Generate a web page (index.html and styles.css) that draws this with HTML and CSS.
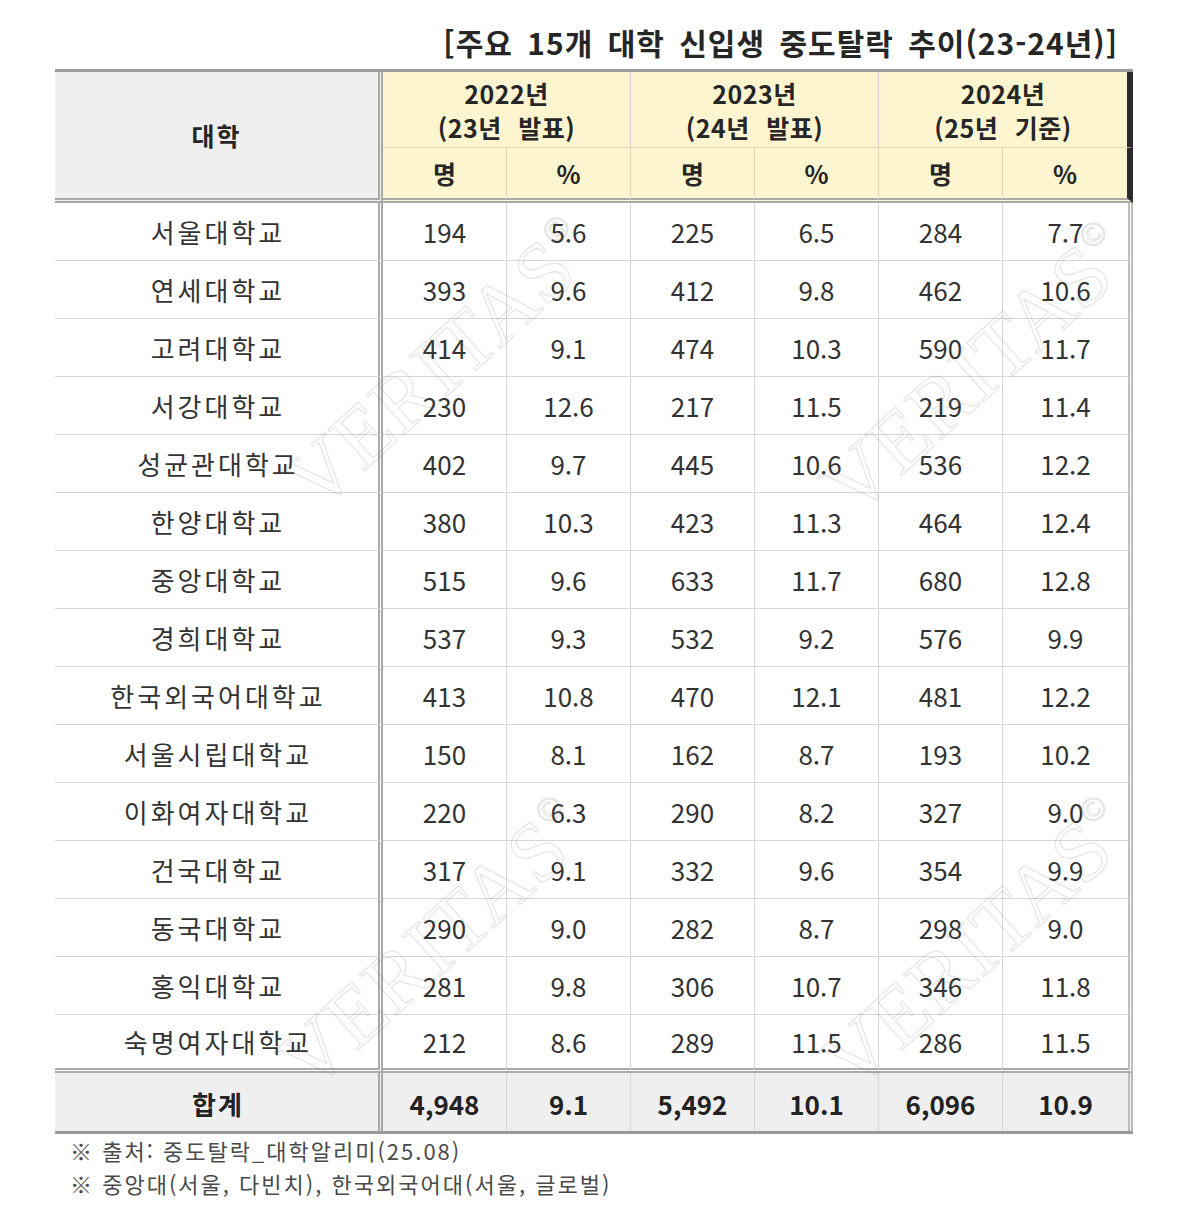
FILE: index.html
```html
<!DOCTYPE html>
<html lang="ko">
<head>
<meta charset="utf-8">
<title>주요 15개 대학 신입생 중도탈락 추이</title>
<link rel="stylesheet" href="styles.css">
</head>
<body>
<div class="page">
  <div class="title">[주요 15개 대학 신입생 중도탈락 추이(23-24년)]</div>
  <div class="sheet">
    <table class="drop">
      <colgroup>
        <col class="c-name"><col class="c-num"><col class="c-num"><col class="c-num"><col class="c-num"><col class="c-num"><col class="c-last">
      </colgroup>
      <thead>
        <tr class="hr1">
          <th rowspan="2" class="h-name">대학</th>
          <th colspan="2" class="h-year">2022년<br>(23년 발표)</th>
          <th colspan="2" class="h-year">2023년<br>(24년 발표)</th>
          <th colspan="2" class="h-year h-end">2024년<br>(25년 기준)</th>
        </tr>
        <tr class="hr2">
          <th class="h-unit">명</th><th class="h-unit">%</th>
          <th class="h-unit">명</th><th class="h-unit">%</th>
          <th class="h-unit">명</th><th class="h-unit h-end">%</th>
        </tr>
      </thead>
      <tbody>
        <tr><td class="name">서울대학교</td><td>194</td><td>5.6</td><td>225</td><td>6.5</td><td>284</td><td class="end">7.7</td></tr>
        <tr><td class="name">연세대학교</td><td>393</td><td>9.6</td><td>412</td><td>9.8</td><td>462</td><td class="end">10.6</td></tr>
        <tr><td class="name">고려대학교</td><td>414</td><td>9.1</td><td>474</td><td>10.3</td><td>590</td><td class="end">11.7</td></tr>
        <tr><td class="name">서강대학교</td><td>230</td><td>12.6</td><td>217</td><td>11.5</td><td>219</td><td class="end">11.4</td></tr>
        <tr><td class="name">성균관대학교</td><td>402</td><td>9.7</td><td>445</td><td>10.6</td><td>536</td><td class="end">12.2</td></tr>
        <tr><td class="name">한양대학교</td><td>380</td><td>10.3</td><td>423</td><td>11.3</td><td>464</td><td class="end">12.4</td></tr>
        <tr><td class="name">중앙대학교</td><td>515</td><td>9.6</td><td>633</td><td>11.7</td><td>680</td><td class="end">12.8</td></tr>
        <tr><td class="name">경희대학교</td><td>537</td><td>9.3</td><td>532</td><td>9.2</td><td>576</td><td class="end">9.9</td></tr>
        <tr><td class="name">한국외국어대학교</td><td>413</td><td>10.8</td><td>470</td><td>12.1</td><td>481</td><td class="end">12.2</td></tr>
        <tr><td class="name">서울시립대학교</td><td>150</td><td>8.1</td><td>162</td><td>8.7</td><td>193</td><td class="end">10.2</td></tr>
        <tr><td class="name">이화여자대학교</td><td>220</td><td>6.3</td><td>290</td><td>8.2</td><td>327</td><td class="end">9.0</td></tr>
        <tr><td class="name">건국대학교</td><td>317</td><td>9.1</td><td>332</td><td>9.6</td><td>354</td><td class="end">9.9</td></tr>
        <tr><td class="name">동국대학교</td><td>290</td><td>9.0</td><td>282</td><td>8.7</td><td>298</td><td class="end">9.0</td></tr>
        <tr><td class="name">홍익대학교</td><td>281</td><td>9.8</td><td>306</td><td>10.7</td><td>346</td><td class="end">11.8</td></tr>
        <tr class="last"><td class="name">숙명여자대학교</td><td>212</td><td>8.6</td><td>289</td><td>11.5</td><td>286</td><td class="end">11.5</td></tr>
      </tbody>
      <tfoot>
        <tr class="total"><td class="name">합계</td><td>4,948</td><td>9.1</td><td>5,492</td><td>10.1</td><td>6,096</td><td class="end">10.9</td></tr>
      </tfoot>
    </table>
    <div class="wm wm-1">VERITAS<span class="wm-c">©</span></div>
    <div class="wm wm-2">VERITAS<span class="wm-c">©</span></div>
    <div class="wm wm-3">VERITAS<span class="wm-c">©</span></div>
    <div class="wm wm-4">VERITAS<span class="wm-c">©</span></div>
  </div>
  <div class="notes">
    <p>※ 출처: 중도탈락_대학알리미(25.08)</p>
    <p>※ 중앙대(서울, 다빈치), 한국외국어대(서울, 글로벌)</p>
  </div>
</div>
</body>
</html>
```

FILE: styles.css
```css
html, body {
  margin: 0;
  padding: 0;
  background: #ffffff;
}

body {
  font-family: "Malgun Gothic", "Noto Sans CJK KR", "Noto Sans", sans-serif;
  color: #333333;
}

.page {
  padding: 22px 0 0 55px;
  width: 1078px;
}

.title {
  text-align: right;
  padding-right: 15px;
  font-size: 30px;
  line-height: 40px;
  font-weight: 700;
  color: #262626;
  letter-spacing: 1px;
  word-spacing: 5px;
  margin-bottom: 7px;
}

.sheet {
  position: relative;
  width: 1078px;
}

.drop {
  width: 1078px;
  table-layout: fixed;
  border-collapse: separate;
  border-spacing: 0;
  border-top: 3px solid #9a9a9a;
  border-bottom: 3px solid #9a9a9a;
  font-size: 26px;
}

.c-name { width: 328px; }
.c-num { width: 124px; }
.c-last { width: 130px; }

.drop th,
.drop td {
  padding: 0;
  text-align: center;
  vertical-align: middle;
}

/* header */
.drop th {
  font-weight: 700;
  color: #262626;
  background: #fdf5d0;
  font-size: 25px;
}

.hr1 { height: 76px; }
.hr2 { height: 55px; }

.h-name {
  background: #efefef !important;
  border-right: 5px double #a9a9a9;
  border-bottom: 5px double #a9a9a9;
  letter-spacing: 2px;
}

.h-year {
  line-height: 34px;
  word-spacing: 9px;
  letter-spacing: 0.5px;
  border-right: 1px solid #d2d2d2;
  border-bottom: 1px solid #e3dab0;
}

.h-unit {
  border-right: 1px solid #dcd6bd;
  border-bottom: 5px double #a9a9a9;
}

.drop th.h-end {
  border-right: 6px solid #2b2b2b;
}

/* body */
.drop tbody tr { height: 58px; }

.drop td {
  border-right: 1px solid #d6d6d6;
  border-bottom: 1px solid #d6d6d6;
  color: #333333;
}

.drop td.name {
  border-right: 5px double #a9a9a9;
  letter-spacing: 3px;
  padding-left: 3px;
}

.drop td.end {
  border-right: 5px double #bdbdbd;
}

.drop tbody tr.last td {
  border-bottom: 5px double #a9a9a9;
}

.drop tr.total { height: 58px; }

.drop tr.total td {
  background: #efefef;
  font-weight: 700;
  color: #222222;
  border-bottom: none;
  padding-top: 3px;
}

.drop tr.total td.name {
  letter-spacing: 2px;
}

/* watermark overlay */
.wm {
  position: absolute;
  font-family: "Liberation Serif", "DejaVu Serif", serif;
  font-size: 84px;
  line-height: 1;
  color: rgba(255, 255, 255, 0);
  -webkit-text-stroke: 1.2px rgba(120, 120, 120, 0.2);
  transform: translate(-50%, -50%) rotate(-42deg);
  white-space: nowrap;
  pointer-events: none;
  letter-spacing: 1px;
}

.wm-c {
  font-size: 34px;
  vertical-align: 40px;
}

.wm-1 { left: 385px; top: 296px; }
.wm-2 { left: 922px; top: 301px; }
.wm-3 { left: 378px; top: 876px; }
.wm-4 { left: 922px; top: 876px; }

/* notes */
.notes {
  padding-left: 15px;
  font-size: 22px;
  line-height: 33px;
  letter-spacing: 2px;
  color: #4a4a4a;
}

.notes p {
  margin: 0;
}
```
